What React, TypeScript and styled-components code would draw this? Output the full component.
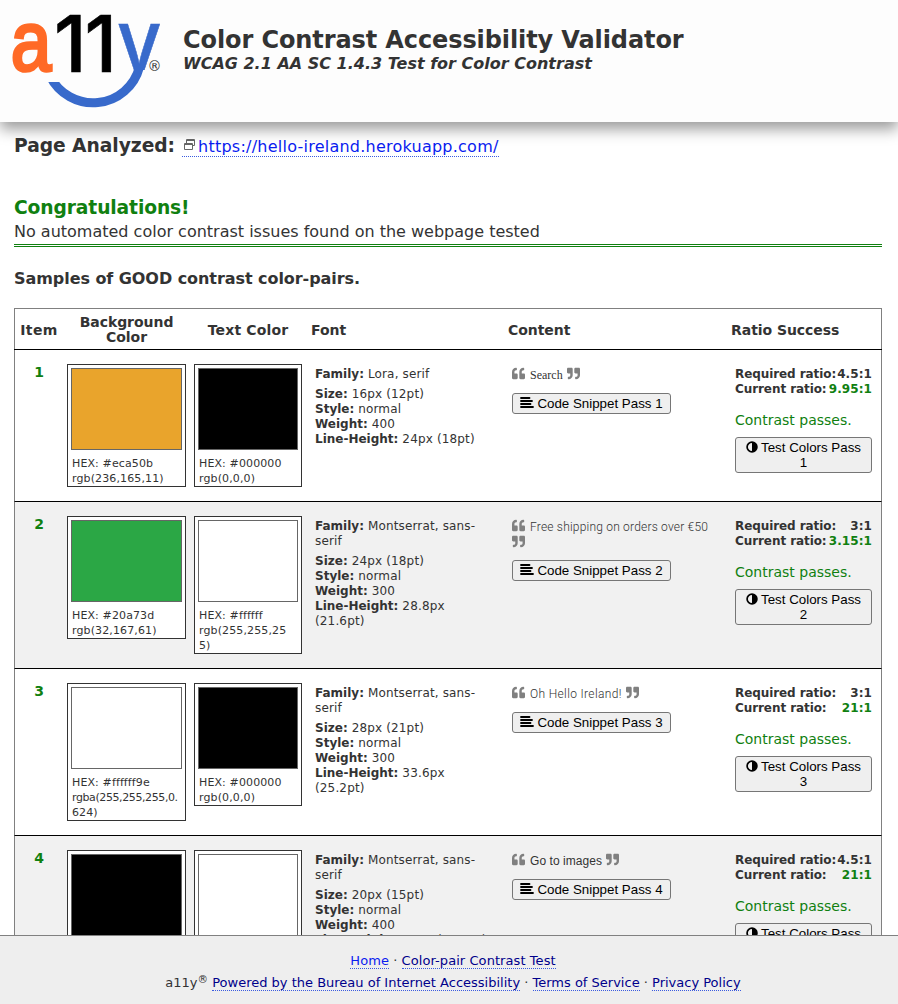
import React from "react";
import styled, { createGlobalStyle } from "styled-components";
import { FaQuoteLeft, FaQuoteRight } from "react-icons/fa";

const GlobalStyle = createGlobalStyle`
  *, *::before, *::after { box-sizing: border-box; }
  html, body { margin: 0; padding: 0; overflow: hidden; }
  body {
    background: #fff;
    color: #333;
    font-family: Verdana, "DejaVu Sans", sans-serif;
    font-size: 16px;
  }
`;

const Page = styled.div`
  display: flex;
  flex-direction: column;
  height: 1004px;
  overflow: hidden;
`;

const Header = styled.header`
  position: relative;
  z-index: 1;
  display: flex;
  flex: none;
  height: 122px;
  padding-left: 8px;
  background: #fdfdfd;
  box-shadow: 0 7px 14px rgba(0, 0, 0, 0.4);
`;

const Logo = styled.svg`
  display: block;
  flex: none;
  width: 175px;
  height: 122px;
`;

const Titles = styled.div`
  padding-top: 26px;
`;

const Title = styled.h1`
  margin: 0;
  font-size: 24px;
  letter-spacing: -0.1px;
  line-height: 28px;
  white-space: nowrap;
`;

const Subtitle = styled.p`
  margin: 0;
  font-size: 16px;
  font-weight: bold;
  font-style: italic;
  line-height: 19px;
  white-space: nowrap;
`;

const Main = styled.main`
  flex: 1;
  min-height: 0;
  overflow: hidden;
  padding: 12px 16px 0 14px;
`;

const Analyzed = styled.h2`
  display: flex;
  align-items: baseline;
  margin: 0;
  font-size: 18.7px;
  letter-spacing: -0.05px;
  line-height: 24px;
  white-space: nowrap;
`;

const SiteLink = styled.a`
  margin-left: 7px;
  padding-left: 1px;
  border-bottom: 1px dotted #3a5be0;
  color: #0a1cf0;
  font-size: 16px;
  font-weight: normal;
  letter-spacing: 0.24px;
  line-height: 18px;
  text-decoration: none;
  svg { margin-right: 3px; vertical-align: 2px; }
`;

const Verdict = styled.section`
  margin-top: 38px;
  height: 51px;
  border-bottom: 3px double #108010;
`;

const VerdictTitle = styled.h2`
  margin: 0;
  color: #108010;
  font-size: 18.7px;
  letter-spacing: -0.12px;
  line-height: 24px;
`;

const VerdictText = styled.p`
  margin: 1px 0 0;
  font-size: 16px;
  line-height: 22px;
`;

const SamplesTitle = styled.h3`
  margin: 20px 0 17px;
  font-size: 16px;
  letter-spacing: -0.06px;
  line-height: 24px;
`;

const Table = styled.div`
  border: 1px solid #808080;
`;

const columns = "48px 127px 116px 197px 223px 1fr";

const HeadRow = styled.div`
  display: grid;
  grid-template-columns: ${columns};
  align-items: center;
  height: 41px;
  margin: 0 -1px;
  padding: 0 1px;
  border-bottom: 1px solid #000;
`;

const HeadCell = styled.div<{ $center?: boolean; $spacing?: number }>`
  padding: ${(p) => (p.$center ? "2px 0 0" : "2px 0 0 5px")};
  text-align: ${(p) => (p.$center ? "center" : "left")};
  font-size: 14px;
  font-weight: bold;
  letter-spacing: ${(p) => p.$spacing ?? -0.05}px;
  line-height: 15px;
`;

const Row = styled.div<{ $shaded: boolean; $height: number }>`
  display: grid;
  grid-template-columns: ${columns};
  align-items: start;
  height: ${(p) => p.$height}px;
  margin: 0 -1px;
  padding: 14px 0 0;
  border-bottom: 1px solid #000;
  border-left: 1px solid #808080;
  border-right: 1px solid #808080;
  background: ${(p) => (p.$shaded ? "#f1f1f1" : "#fff")};
`;

const ItemNumber = styled.div`
  color: #108010;
  font-size: 14px;
  font-weight: bold;
  line-height: 16px;
  text-align: center;
`;

const Swatch = styled.div`
  margin: 0 4px;
  padding: 3px;
  border: 1px solid #333;
  background: #fff;
`;

const SwatchFill = styled.div<{ $color: string }>`
  height: 82px;
  border: 1px solid #666;
  background: ${(p) => p.$color};
`;

const SwatchText = styled.div`
  padding: 6px 0 0 1px;
  margin-bottom: -3px;
  font-size: 11px;
  letter-spacing: 0.12px;
  line-height: 15px;
  white-space: nowrap;
`;

const Tight = styled.span`
  letter-spacing: -0.4px;
`;

const FontInfo = styled.div`
  padding: 3px 0 0 9px;
  font-size: 12px;
  letter-spacing: 0.15px;
  line-height: 15px;
  white-space: nowrap;
  b { letter-spacing: 0; }
`;

const Family = styled.div`
  margin-bottom: 5px;
`;

const Content = styled.div`
  padding: 3px 0 0 9px;
`;

const Quote = styled.div<{ $lines: number }>`
  height: ${(p) => p.$lines * 15 + 2}px;
  color: #808080;
  font-size: 13px;
  line-height: 16px;
  white-space: nowrap;
  svg { display: inline-block; vertical-align: -1px; }
`;

const Sample = styled.span<{ $face: string; $weight: number; $spacing: number }>`
  margin: 0 4.5px 0 5px;
  color: #333;
  font-family: ${(p) => p.$face};
  font-weight: ${(p) => p.$weight};
  font-size: 12px;
  letter-spacing: ${(p) => p.$spacing}px;
`;

const Button = styled.button`
  display: block;
  border: 1px solid #767676;
  border-radius: 3px;
  background: #efefef;
  color: #000;
  font-family: Arial, "Liberation Sans", sans-serif;
  font-size: 13.333px;
  line-height: 15px;
  white-space: nowrap;
`;

const SnippetButton = styled(Button)`
  width: 159px;
  height: 21px;
  margin-top: 9px;
  padding: 0;
  svg { margin-right: 3px; vertical-align: 0; }
`;

const TestButton = styled(Button)`
  width: 137px;
  height: 36px;
  margin-top: 8px;
  padding: 0;
  svg { margin-right: 3px; vertical-align: -1px; }
`;

const Ratio = styled.div`
  padding: 3px 9px 0 9px;
`;

const RatioLine = styled.div`
  display: flex;
  justify-content: space-between;
  font-size: 12px;
  font-weight: bold;
  letter-spacing: -0.08px;
  line-height: 15px;
  white-space: nowrap;
`;

const Value = styled.span<{ $good?: boolean }>`
  color: ${(p) => (p.$good ? "#108010" : "inherit")};
  letter-spacing: 0.08px;
`;

const Passes = styled.div`
  margin-top: 14px;
  color: #108010;
  font-size: 14px;
  line-height: 18px;
`;

const Footer = styled.footer`
  flex: none;
  height: 69px;
  padding-top: 14px;
  border-top: 1px solid #808080;
  background: #eee;
  font-size: 13px;
  line-height: 22px;
  text-align: center;
  white-space: nowrap;
`;

const FooterLine = styled.div<{ $spacing: number }>`
  padding-left: 8px;
  letter-spacing: ${(p) => p.$spacing}px;
  sup { font-size: 10.5px; line-height: 0; vertical-align: 4px; }
`;

const FooterLink = styled.a<{ $active?: boolean }>`
  border-bottom: 1px dotted #3a5be0;
  color: ${(p) => (p.$active ? "#0a1cf0" : "#00008b")};
  text-decoration: none;
`;

const WindowIcon = () => (
  <svg width="12" height="11" viewBox="0 0 12 11" fill="none" stroke="#666">
    <path d="M3.500 4V.5h8v6H9" />
    <path d="M3.500 1.500h8" />
    <path d="M1.500 4.500h8v6h-8zM1.500 5.500h8" />
  </svg>
);

const LinesIcon = () => (
  <svg width="14" height="11" viewBox="0 0 14 11" stroke="#000" strokeWidth="1.800" strokeLinecap="round">
    <path d="M1 1h8.500M1 4h11M1 7h9.500M1 10h12" />
  </svg>
);

const ContrastIcon = () => (
  <svg width="12" height="12" viewBox="0 0 12 12">
    <circle cx="6" cy="6" r="4.900" fill="none" stroke="#000" strokeWidth="1.700" />
    <path d="M6 1a5 5 0 0 1 0 10z" />
  </svg>
);

const LogoMark = () => (
  <Logo viewBox="8 0 175 122" aria-label="a11y">
    <defs>
      <clipPath id="arms"><rect x="110" y="20" width="60" height="50" /></clipPath>
      <clipPath id="smile"><rect x="40" y="82" width="60" height="40" /><rect x="99" y="66" width="60" height="50" /></clipPath>
    </defs>
    <text transform="translate(11 70.300) scale(.86 1)" fontFamily="Liberation Sans" fontSize="84" fill="#ff6a26" stroke="#ff6a26" strokeWidth="3.600">a</text>
    <text x="54 84.500" y="72" fontFamily="Inter" fontSize="78.500" fontWeight="500" stroke="#000" strokeWidth=".6">11</text>
    <text clipPath="url(#arms)" x="117" y="72" fontFamily="Inter" fontSize="88" fontWeight="500" fill="#386acb" stroke="#386acb" strokeWidth=".6" textLength="44.500" lengthAdjust="spacingAndGlyphs">y</text>
    <path clipPath="url(#smile)" d="M50 76A48 48 0 0 0 139.500 67" fill="none" stroke="#386acb" strokeWidth="9" />
    <text x="147.500" y="71" fontFamily="DejaVu Sans" fontSize="14" fill="#333">®</text>
  </Logo>
);

type Item = {
  bg: string; bgText: string[]; fg: string; fgText: string[];
  family: string[]; size: string; weight: string; lineHeight: string[];
  sample: string; face: string; faceWeight: number; spacing: number; wraps?: boolean;
  required: string; current: string; height: number;
};

const grotesk = '"Helvetica Neue", "Liberation Sans", sans-serif';
const light = '"Helvetica Neue", Roboto, sans-serif';

const items: Item[] = [
  {
    bg: "#e9a42c", bgText: ["HEX: #eca50b", "rgb(236,165,11)"], fg: "#000", fgText: ["HEX: #000000", "rgb(0,0,0)"],
    family: ["Lora, serif"], size: "16px (12pt)", weight: "400", lineHeight: ["24px (18pt)"],
    sample: "Search", face: '"Liberation Serif", serif', faceWeight: 400, spacing: 0,
    required: "4.5:1", current: "9.95:1", height: 152,
  },
  {
    bg: "#2ba745", bgText: ["HEX: #20a73d", "rgb(32,167,61)"], fg: "#fff", fgText: ["HEX: #ffffff", "rgb(255,255,25", "5)"],
    family: ["Montserrat, sans-", "serif"], size: "24px (18pt)", weight: "300", lineHeight: ["28.8px", "(21.6pt)"],
    sample: "Free shipping on orders over €50", face: light, faceWeight: 300, spacing: 0.2, wraps: true,
    required: "3:1", current: "3.15:1", height: 167,
  },
  {
    bg: "#fff", bgText: ["HEX: #ffffff9e", "rgba(255,255,255,0.", "624)"], fg: "#000", fgText: ["HEX: #000000", "rgb(0,0,0)"],
    family: ["Montserrat, sans-", "serif"], size: "28px (21pt)", weight: "300", lineHeight: ["33.6px", "(25.2pt)"],
    sample: "Oh Hello Ireland!", face: light, faceWeight: 300, spacing: 0.35,
    required: "3:1", current: "21:1", height: 167,
  },
  {
    bg: "#000", bgText: ["HEX: #000000", "rgb(0,0,0)"], fg: "#fff", fgText: ["HEX: #ffffff", "rgb(255,255,25", "5)"],
    family: ["Montserrat, sans-", "serif"], size: "20px (15pt)", weight: "400", lineHeight: ["30px (22.5pt)"],
    sample: "Go to images", face: grotesk, faceWeight: 400, spacing: 0.05,
    required: "4.5:1", current: "21:1", height: 167,
  },
];

const Lines = ({ text }: { text: string[] }) => (
  <>
    {text.map((t, i) => (
      <React.Fragment key={i}>
        {i > 0 && <br />}
        {t.startsWith("rgba") ? <Tight>{t}</Tight> : t}
      </React.Fragment>
    ))}
  </>
);

const ItemRow = ({ item, n }: { item: Item; n: number }) => (
  <Row $shaded={n % 2 === 0} $height={item.height}>
    <ItemNumber>{n}</ItemNumber>
    <Swatch>
      <SwatchFill $color={item.bg} />
      <SwatchText><Lines text={item.bgText} /></SwatchText>
    </Swatch>
    <Swatch>
      <SwatchFill $color={item.fg} />
      <SwatchText><Lines text={item.fgText} /></SwatchText>
    </Swatch>
    <FontInfo>
      <Family><b>Family:</b> <Lines text={item.family} /></Family>
      <div><b>Size:</b> {item.size}</div>
      <div><b>Style:</b> normal</div>
      <div><b>Weight:</b> {item.weight}</div>
      <div><b>Line-Height:</b> <Lines text={item.lineHeight} /></div>
    </FontInfo>
    <Content>
      <Quote $lines={item.wraps ? 2 : 1}>
        <FaQuoteLeft />
        <Sample $face={item.face} $weight={item.faceWeight} $spacing={item.spacing}>{item.sample}</Sample>
        {item.wraps && <br />}
        <FaQuoteRight />
      </Quote>
      <SnippetButton><LinesIcon />Code Snippet Pass {n}</SnippetButton>
    </Content>
    <Ratio>
      <RatioLine><span>Required ratio:</span><Value>{item.required}</Value></RatioLine>
      <RatioLine><span>Current ratio:</span><Value $good>{item.current}</Value></RatioLine>
      <Passes>Contrast passes.</Passes>
      <TestButton><ContrastIcon />Test Colors Pass<br />{n}</TestButton>
    </Ratio>
  </Row>
);

export default function App() {
  return (
    <Page>
      <GlobalStyle />
      <Header>
        <LogoMark />
        <Titles>
          <Title>Color Contrast Accessibility Validator</Title>
          <Subtitle>WCAG 2.1 AA SC 1.4.3 Test for Color Contrast</Subtitle>
        </Titles>
      </Header>
      <Main>
        <Analyzed>
          Page Analyzed:
          <SiteLink><WindowIcon />https://hello-ireland.herokuapp.com/</SiteLink>
        </Analyzed>
        <Verdict>
          <VerdictTitle>Congratulations!</VerdictTitle>
          <VerdictText>No automated color contrast issues found on the webpage tested</VerdictText>
        </Verdict>
        <SamplesTitle>Samples of GOOD contrast color-pairs.</SamplesTitle>
        <Table>
          <HeadRow>
            <HeadCell $center $spacing={0.4}>Item</HeadCell>
            <HeadCell $center>Background<br />Color</HeadCell>
            <HeadCell $center $spacing={0.15}>Text Color</HeadCell>
            <HeadCell>Font</HeadCell>
            <HeadCell>Content</HeadCell>
            <HeadCell>Ratio Success</HeadCell>
          </HeadRow>
          {items.map((item, i) => <ItemRow key={i} item={item} n={i + 1} />)}
        </Table>
      </Main>
      <Footer>
        <FooterLine $spacing={0.07}><FooterLink $active>Home</FooterLink> · <FooterLink>Color-pair Contrast Test</FooterLink></FooterLine>
        <FooterLine $spacing={0}>
          a11y<sup>®</sup> <FooterLink>Powered by the Bureau of Internet Accessibility</FooterLink> · <FooterLink>Terms of Service</FooterLink> · <FooterLink>Privacy Policy</FooterLink>
        </FooterLine>
      </Footer>
    </Page>
  );
}
